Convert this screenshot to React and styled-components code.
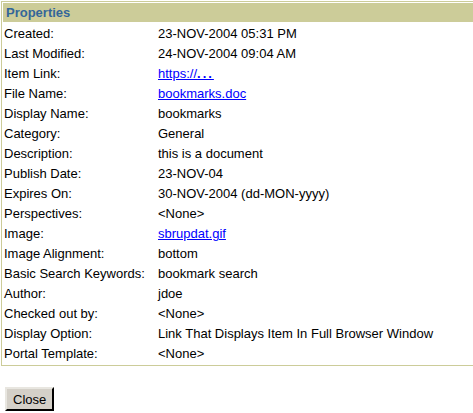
import React from 'react'
import styled, { createGlobalStyle } from 'styled-components'

const GlobalStyle = createGlobalStyle`
  html, body {
    margin: 0;
    padding: 0;
    background: #fff;
    overflow: hidden;
  }
  body {
    font-family: "Liberation Sans", Arial, sans-serif;
    font-size: 13px;
    color: #000;
  }
`

const Page = styled.div`
  padding: 1px 0 0 1px;
  width: 473px;
  height: 413px;
  box-sizing: border-box;
  overflow: hidden;
`

const Box = styled.div`
  width: 490px;
  border: 1px solid #cccc99;
  padding: 1px;
  box-sizing: border-box;
`

const Header = styled.div`
  height: 19px;
  background-color: #cccc99;
  color: #336699;
  font-weight: 700;
  font-size: 13px;
  line-height: 19px;
  padding-left: 3px;
`

const Rows = styled.div`
  display: grid;
  grid-template-columns: 155px 1fr;
  grid-auto-rows: 20px;
  margin-top: 1px;
  padding-bottom: 1px;
`

const Label = styled.div`
  padding-left: 1px;
  line-height: 21px;
  white-space: nowrap;
`

const Value = styled.div`
  line-height: 21px;
  white-space: nowrap;
`

const Link = styled.a`
  color: #0000ff;
  text-decoration: underline;
  cursor: pointer;
`

const Dots = styled.span`
  font-weight: 700;
  letter-spacing: 2px;
`

const Actions = styled.div`
  padding: 21px 0 0 4px;
`

const Button = styled.button`
  font-family: "Liberation Sans", Arial, sans-serif;
  font-size: 13px;
  color: #000;
  background-color: #d4d0c8;
  border: 2px outset #e8e6e0;
  border-right-color: #404040;
  border-bottom-color: #404040;
  padding: 0 6px;
  height: 24px;
  width: 49px;
`

const properties = [
  ['Created:', '23-NOV-2004 05:31 PM'],
  ['Last Modified:', '24-NOV-2004 09:04 AM'],
  ['Item Link:', <Link key="l">https://<Dots>...</Dots></Link>],
  ['File Name:', <Link key="f">bookmarks.doc</Link>],
  ['Display Name:', 'bookmarks'],
  ['Category:', 'General'],
  ['Description:', 'this is a document'],
  ['Publish Date:', '23-NOV-04'],
  ['Expires On:', '30-NOV-2004 (dd-MON-yyyy)'],
  ['Perspectives:', '<None>'],
  ['Image:', <Link key="i">sbrupdat.gif</Link>],
  ['Image Alignment:', 'bottom'],
  ['Basic Search Keywords:', 'bookmark search'],
  ['Author:', 'jdoe'],
  ['Checked out by:', '<None>'],
  ['Display Option:', 'Link That Displays Item In Full Browser Window'],
  ['Portal Template:', '<None>'],
]

export default function App() {
  return (
    <Page>
      <GlobalStyle />
      <Box>
        <Header>Properties</Header>
        <Rows>
          {properties.map(([label, value], idx) => (
            <React.Fragment key={idx}>
              <Label>{label}</Label>
              <Value>{value}</Value>
            </React.Fragment>
          ))}
        </Rows>
      </Box>
      <Actions>
        <Button>Close</Button>
      </Actions>
    </Page>
  )
}
